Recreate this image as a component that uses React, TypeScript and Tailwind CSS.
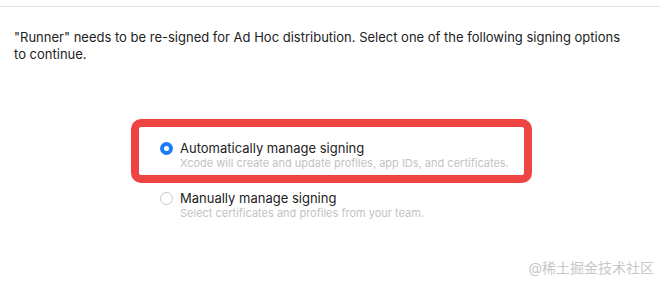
import React from "react";

const options = [
  {
    title: "Automatically manage signing",
    sub: "Xcode will create and update profiles, app IDs, and certificates.",
    checked: true,
  },
  {
    title: "Manually manage signing",
    sub: "Select certificates and profiles from your team.",
    checked: false,
  },
];

function Radio({ checked }: { checked: boolean }) {
  if (checked) {
    return (
      <span className="flex h-[13px] w-[13px] shrink-0 items-center justify-center rounded-full bg-[#1f7cf5]">
        <span className="h-[5px] w-[5px] rounded-full bg-white" />
      </span>
    );
  }
  return <span className="h-[13px] w-[13px] shrink-0 rounded-full border border-[#c9c9c9] bg-white" />;
}

export default function App() {
  return (
    <div
      className="relative h-[283px] w-[660px] overflow-hidden bg-white text-[#222]"
      style={{ fontFamily: "Inter, 'Noto Sans CJK SC', sans-serif" }}
    >
      <div className="h-[7px] border-b border-[#e3e3e3]" />

      <p className="mt-[22px] pl-[14px] pr-[30px] text-[13px] leading-[17px]">
        "Runner" needs to be re-signed for Ad Hoc distribution. Select one of the following signing options to
        continue.
      </p>

      <div className="mt-[56px] flex justify-center pl-[3px]">
        <div className="flex flex-col">
          {options.map((o) => (
            <div
              key={o.title}
              className={
                o.checked
                  ? "h-[64px] w-[401px] rounded-[10px] border-[8px] border-[#ee4444] pl-[21px] pt-[13px]"
                  : "w-[401px] pl-[29px] pt-[7px]"
              }
            >
              <div className="flex items-center gap-[7px]">
                <Radio checked={o.checked} />
                <span className="text-[13px] leading-[16px]">{o.title}</span>
              </div>
              <div className="pl-[20px] text-[11px] leading-[15px] text-[#c2c2c2]">{o.sub}</div>
            </div>
          ))}
        </div>
      </div>

      <div className="absolute bottom-[5px] right-[6px] text-[14px] text-[#c8c8c8]">@稀土掘金技术社区</div>
    </div>
  );
}
